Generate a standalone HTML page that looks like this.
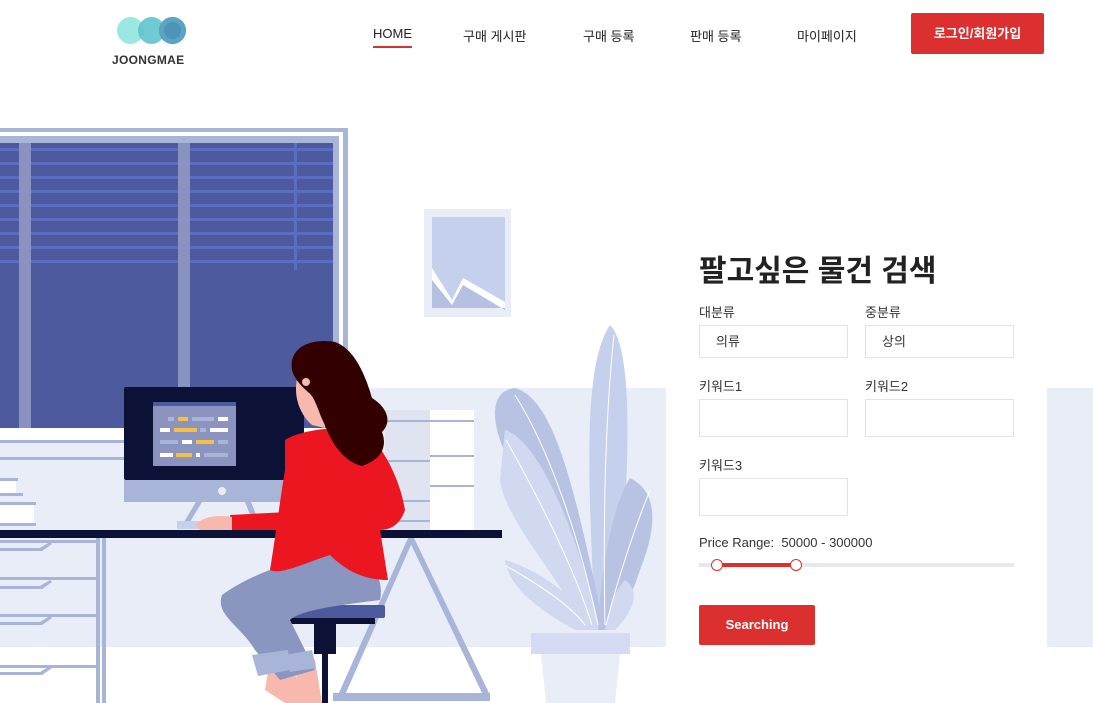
<!DOCTYPE html>
<html><head><meta charset="utf-8"><style>
*{margin:0;padding:0;box-sizing:border-box}
body{width:1093px;height:703px;overflow:hidden;background:#fff;font-family:"Liberation Sans","Noto Sans CJK KR",sans-serif;color:#333;position:relative}
.logo{position:absolute;left:112px;top:17px;width:80px}
.logo .c{position:absolute;top:0;width:27px;height:27px;border-radius:50%}
.logo .t{position:absolute;top:36px;left:0;font-size:12px;font-weight:bold;letter-spacing:.3px;color:#333}
.nav a{position:absolute;top:26px;font-size:13px;color:#222;text-decoration:none}
.home:after{content:"";position:absolute;left:0;right:0;top:20px;height:2px;background:#d93030}
.btn{position:absolute;left:911px;top:13px;width:133px;height:41px;background:#dc2f2f;color:#fff;font-size:13px;font-weight:bold;text-align:center;line-height:41px;border-radius:2px}
h1{position:absolute;left:699px;top:246px;font-size:30px;font-weight:bold;color:#222;letter-spacing:0}
.lb{position:absolute;font-size:13px;color:#333}
.in{position:absolute;width:149px;border:1px solid #e3e3e3;background:#fff;font-size:13px;padding-left:16px;color:#333}
.srch{position:absolute;left:699px;top:605px;width:116px;height:40px;background:#dc2f2f;color:#fff;font-weight:bold;font-size:13px;text-align:center;line-height:40px;border-radius:2px}
</style></head><body>
<div class="logo">
<div class="c" style="left:5px;background:#8fe5de;opacity:.9"></div>
<div class="c" style="left:26px;background:#5fc4cf;opacity:.9"></div>
<div class="c" style="left:47px;background:#4f94b8;box-shadow:inset 0 0 0 5px #5aa5c4"></div>
<div class="t">JOONGMAE</div>
</div>
<div class="nav">
<a class="home" style="left:373px">HOME</a>
<a style="left:463px">구매 게시판</a>
<a style="left:583px">구매 등록</a>
<a style="left:690px">판매 등록</a>
<a style="left:797px">마이페이지</a>
</div>
<div class="btn">로그인/회원가입</div>

<svg style="position:absolute;left:0;top:0" width="700" height="703">
<rect x="0" y="388" width="666" height="259" fill="#e9edf7"/>
<rect x="0" y="128" width="348" height="312" fill="#a9b4d9"/>
<rect x="0" y="132" width="343" height="304" fill="#fff"/>
<rect x="0" y="136" width="339" height="296" fill="#a9b4d9"/>
<rect x="0" y="143" width="333" height="285" fill="#4e5a9e"/>
<g fill="#5c6cc0">
<rect x="0" y="148" width="333" height="3"/><rect x="0" y="162" width="333" height="3"/><rect x="0" y="176" width="333" height="3"/><rect x="0" y="190" width="333" height="3"/><rect x="0" y="204" width="333" height="3"/><rect x="0" y="218" width="333" height="3"/><rect x="0" y="232" width="333" height="3"/><rect x="0" y="246" width="333" height="3"/><rect x="0" y="260" width="333" height="3"/>
<rect x="294" y="143" width="3" height="127"/>
</g>
<rect x="19" y="143" width="12" height="285" fill="#8a93c0"/>
<rect x="178" y="143" width="12" height="285" fill="#8a93c0"/>
<rect x="0" y="428" width="345" height="12" fill="#fff"/>
<rect x="0" y="440" width="130" height="3" fill="#a9b4d9"/>
<rect x="0" y="457" width="130" height="3" fill="#a9b4d9"/>
<rect x="0" y="478" width="18" height="3" fill="#a9b4d9"/><rect x="0" y="481" width="16" height="12" fill="#fff"/>
<rect x="0" y="493" width="23" height="3" fill="#a9b4d9"/><rect x="0" y="502" width="36" height="3" fill="#a9b4d9"/><rect x="0" y="505" width="34" height="18" fill="#fff"/><rect x="0" y="523" width="36" height="3" fill="#a9b4d9"/>
<rect x="424" y="209" width="87" height="108" fill="#e9edf7"/>
<rect x="432" y="217" width="73" height="91" fill="#c5d0ec"/>
<polygon points="432,268 452,300 463,278 505,302 505,308 432,308" fill="#fff"/>
<polygon points="432,280 452,305 463,285 505,310 505,308 432,308" fill="#b6c0e0"/>
<rect x="385" y="410" width="45" height="120" fill="#dfe4f0"/>
<rect x="430" y="410" width="44" height="120" fill="#fff"/>
<g fill="#a9b4d9"><rect x="385" y="420" width="89" height="2"/><rect x="385" y="460" width="45" height="2"/><rect x="430" y="455" width="44" height="2"/><rect x="385" y="500" width="45" height="2"/><rect x="430" y="485" width="44" height="2"/><rect x="385" y="520" width="45" height="2"/></g>
<rect x="124" y="387" width="180" height="93" rx="2" fill="#0b1236"/>
<rect x="124" y="480" width="180" height="22" fill="#a9b4d9"/>
<circle cx="222" cy="491" r="4" fill="#e9edf7"/>
<polygon points="196,502 202,502 190,522 184,522" fill="#a9b4d9"/>
<polygon points="245,502 251,502 259,522 253,522" fill="#a9b4d9"/>
<rect x="177" y="521" width="40" height="8" fill="#c5d0ec"/>
<rect x="153" y="402" width="83" height="64" fill="#8a94bf"/>
<rect x="153" y="402" width="83" height="4" fill="#4e5a9e"/>
<g><rect x="168" y="417" width="6" height="4" fill="#a9b4d9"/><rect x="178" y="417" width="10" height="4" fill="#f5c043"/><rect x="192" y="417" width="22" height="4" fill="#a9b4d9"/><rect x="218" y="417" width="10" height="4" fill="#fff"/>
<rect x="160" y="428" width="10" height="4" fill="#fff"/><rect x="174" y="428" width="23" height="4" fill="#f5c043"/><rect x="200" y="428" width="6" height="4" fill="#a9b4d9"/><rect x="210" y="428" width="18" height="4" fill="#fff"/>
<rect x="160" y="440" width="18" height="4" fill="#a9b4d9"/><rect x="182" y="440" width="10" height="4" fill="#fff"/><rect x="196" y="440" width="18" height="4" fill="#f5c043"/><rect x="218" y="440" width="10" height="4" fill="#a9b4d9"/>
<rect x="160" y="453" width="13" height="4" fill="#fff"/><rect x="176" y="453" width="16" height="4" fill="#f5c043"/><rect x="196" y="453" width="4" height="4" fill="#fff"/><rect x="204" y="453" width="24" height="4" fill="#a9b4d9"/></g>
<rect x="0" y="530" width="502" height="8" fill="#0b1236"/>
<g fill="#a9b4d9"><rect x="96" y="538" width="4" height="165"/><rect x="102" y="538" width="4" height="165"/>
<rect x="0" y="540" width="96" height="3"/><rect x="0" y="577" width="96" height="3"/><rect x="0" y="614" width="96" height="3"/><rect x="0" y="665" width="96" height="3"/>
<polygon points="0,548 40,548 50,542 52,544 42,551 0,551"/><polygon points="0,586 40,586 50,580 52,582 42,589 0,589"/><polygon points="0,622 40,622 50,616 52,618 42,625 0,625"/><polygon points="0,672 40,672 50,666 52,668 42,675 0,675"/>
<polygon points="408,538 414,538 490,695 483,695"/><polygon points="408,538 414,538 345,695 338,695"/>
<rect x="333" y="693" width="157" height="8"/></g>
<g fill="#c5d0ec">
<path d="M610,325 C635,350 630,480 615,630 L595,630 C590,500 580,370 610,325Z"/>
<path d="M515,388 C560,400 580,520 605,630 L590,630 C560,560 510,470 500,440 C490,410 495,390 515,388Z" fill="#b8c3e4"/>
<path d="M505,430 C540,440 580,540 600,630 L585,630 C555,570 505,520 500,480Z" fill="#d0d9f0"/>
<path d="M505,560 C540,570 580,600 595,630 L575,630 C540,610 510,590 505,560Z" fill="#d0d9f0"/>
<path d="M630,478 C655,490 660,520 640,570 C630,600 620,620 608,630 L598,630 C600,580 610,510 630,478Z" fill="#b8c3e4"/>
<path d="M625,580 C640,590 635,610 615,630 L605,630 C608,610 615,590 625,580Z" fill="#d0d9f0"/>
</g>
<g stroke="#fff" stroke-width="1" fill="none"><path d="M614,335 C605,420 603,520 605,625"/><path d="M515,395 C550,450 580,540 598,625"/><path d="M506,440 C540,500 575,570 592,625"/><path d="M650,490 C630,540 615,590 606,625"/><path d="M506,566 C540,585 570,605 585,625"/></g>
<rect x="531" y="633" width="99" height="21" fill="#d5dbf3"/>
<polygon points="541,654 620,654 615,703 546,703" fill="#e9edf7"/>
<rect x="268" y="605" width="117" height="13" rx="2" fill="#4e5a9e"/>
<rect x="280" y="618" width="95" height="6" fill="#0b1236"/>
<rect x="314" y="624" width="22" height="30" fill="#0b1236"/>
<rect x="322" y="654" width="6" height="49" fill="#0b1236"/>
<path d="M265,690 L285,703 L305,703 L290,660 L270,660Z" fill="#f7b8ad"/>
<path d="M295,690 L305,703 L322,703 L315,660 L298,660Z" fill="#f7b8ad"/>
<path d="M222,595 C250,575 290,560 330,555 C370,555 385,575 380,600 C340,605 300,610 290,620 L315,670 L280,680 L255,650 C240,625 215,615 222,595Z" fill="#8a96bf"/>
<path d="M252,655 L288,650 L290,670 L258,676Z" fill="#a9b4d9"/>
<path d="M285,655 L312,650 L316,668 L290,672Z" fill="#a9b4d9"/>
<path d="M298,375 C292,395 300,415 312,425 L325,428 L320,380Z" fill="#f7b8ad"/>
<path d="M285,440 C300,430 340,425 365,430 C385,450 400,480 405,510 C400,525 390,530 380,530 L388,580 C370,580 350,575 330,555 C300,565 280,575 270,570 C275,540 280,500 285,470Z" fill="#ec1620"/>
<path d="M230,515 L288,512 L290,530 L232,530Z" fill="#ec1620"/>
<path d="M195,525 C205,515 220,515 232,517 L232,530 L200,530Z" fill="#f7b8ad"/>
<path d="M292,370 C288,345 315,338 335,342 C358,350 368,385 372,398 C388,408 392,422 382,432 C388,448 380,460 362,466 C345,462 332,445 325,425 C318,412 316,398 308,392 C300,385 294,378 292,370Z" fill="#330000"/>
<circle cx="306" cy="382" r="4" fill="#f7b8ad"/>
</svg>
<svg style="position:absolute;left:1047px;top:388px" width="46" height="259"><rect width="46" height="259" fill="#e9edf7"/></svg>

<h1>팔고싶은 물건 검색</h1>
<div class="lb" style="left:699px;top:302px">대분류</div>
<div class="lb" style="left:865px;top:302px">중분류</div>
<div class="in" style="left:699px;top:325px;height:33px;line-height:31px">의류</div>
<div class="in" style="left:865px;top:325px;height:33px;line-height:31px">상의</div>
<div class="lb" style="left:699px;top:376px">키워드1</div>
<div class="lb" style="left:865px;top:376px">키워드2</div>
<div class="in" style="left:699px;top:399px;height:38px"></div>
<div class="in" style="left:865px;top:399px;height:38px"></div>
<div class="lb" style="left:699px;top:455px">키워드3</div>
<div class="in" style="left:699px;top:478px;height:38px"></div>
<div class="lb" style="left:699px;top:535px">Price Range:&nbsp; 50000 - 300000</div>
<div style="position:absolute;left:699px;top:563px;width:315px;height:4px;background:#e8e8e8"></div>
<div style="position:absolute;left:716px;top:563px;width:80px;height:4px;background:#dc2f2f"></div>
<div style="position:absolute;left:711px;top:559px;width:12px;height:12px;border-radius:50%;background:#fff;border:1.5px solid #dc2f2f"></div>
<div style="position:absolute;left:790px;top:559px;width:12px;height:12px;border-radius:50%;background:#fff;border:1.5px solid #dc2f2f"></div>
<div class="srch">Searching</div>
</body></html>
